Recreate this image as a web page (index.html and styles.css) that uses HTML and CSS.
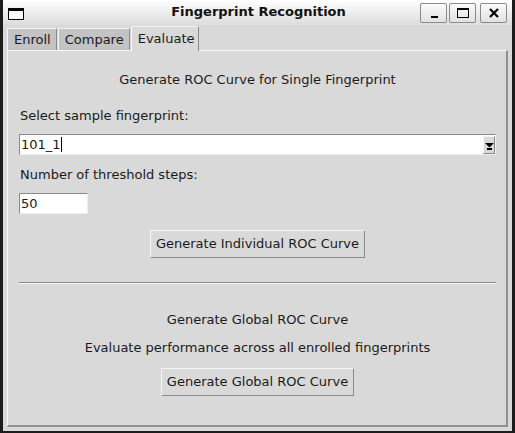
FILE: index.html
```html
<!DOCTYPE html>
<html>
<head>
<meta charset="utf-8">
<title>Fingerprint Recognition</title>
<link rel="stylesheet" href="styles.css">
</head>
<body>
<div class="window">
  <div class="titlebar">
    <svg class="winicon" width="16" height="12" viewBox="0 0 16 12">
      <rect x="0.5" y="0.5" width="15" height="11" fill="#fff" stroke="#000"/>
      <rect x="0" y="0" width="16" height="3" fill="#000"/>
    </svg>
    <div class="title">Fingerprint Recognition</div>
    <div class="wbtns">
      <div class="wbtn"><svg width="12" height="12" viewBox="0 0 12 12"><rect x="3" y="9" width="7" height="2" fill="#000"/></svg></div>
      <div class="wbtn"><svg width="14" height="12" viewBox="0 0 14 12"><rect x="1.5" y="1.5" width="11" height="9" fill="none" stroke="#000"/><rect x="1" y="1" width="12" height="2" fill="#000"/></svg></div>
      <div class="wbtn"><svg width="12" height="12" viewBox="0 0 12 12"><path d="M2 2 L10 10 M10 2 L2 10" stroke="#000" stroke-width="2.2"/></svg></div>
    </div>
  </div>
  <div class="client">
    <div class="tabs">
      <div class="tab">Enroll</div>
      <div class="tab">Compare</div>
      <div class="tab active">Evaluate</div>
    </div>
    <div class="panel">
      <div class="heading h1">Generate ROC Curve for Single Fingerprint</div>
      <div class="label l1">Select sample fingerprint:</div>
      <div class="combo">
        <div class="combo-text">101_1<span class="caret"></span></div>
        <div class="combo-btn"><svg width="9" height="7" viewBox="0 0 9 7"><path d="M0 0 H9 L4.5 4.5 Z" fill="#000"/><rect x="2" y="5" width="5" height="2" fill="#000"/></svg></div>
      </div>
      <div class="label l2">Number of threshold steps:</div>
      <div class="entry">50</div>
      <div class="btnrow b1"><div class="button">Generate Individual ROC Curve</div></div>
      <div class="separator"></div>
      <div class="heading h2">Generate Global ROC Curve</div>
      <div class="heading h3">Evaluate performance across all enrolled fingerprints</div>
      <div class="btnrow b2"><div class="button">Generate Global ROC Curve</div></div>
    </div>
  </div>
</div>
</body>
</html>
```
FILE: styles.css
```css
html, body {
  margin: 0;
  padding: 0;
  background: #1c1c1c;
}
body {
  width: 515px;
  height: 433px;
  overflow: hidden;
  font-family: "DejaVu Sans", sans-serif;
  font-size: 13px;
  color: #1a1a1a;
}
.window {
  width: 515px;
  height: 433px;
  box-sizing: border-box;
  border-left: 3px solid #1c1c1c;
  border-right: 3px solid #1c1c1c;
  border-bottom: 2px solid #1c1c1c;
  display: flex;
  flex-direction: column;
  background: #d9d9d9;
}
.titlebar {
  height: 25px;
  flex: none;
  background: linear-gradient(#ffffff, #dcdcdc);
  display: flex;
  align-items: center;
  position: relative;
}
.winicon {
  margin-left: 5px;
  margin-top: 3px;
}
.title {
  position: absolute;
  left: 0;
  right: 0;
  top: 4px;
  text-align: center;
  font-weight: bold;
  font-size: 13px;
  color: #111;
  padding-left: 2px;
}
.wbtns {
  margin-left: auto;
  margin-right: 5px;
  display: flex;
  gap: 2px;
  position: relative;
}
.wbtn {
  width: 25px;
  height: 18px;
  border: 1px solid #8a8a8a;
  border-radius: 2px;
  background: linear-gradient(#fafafa, #e2e2e2);
  display: flex;
  align-items: center;
  justify-content: center;
}
.wbtn + .wbtn + .wbtn { margin-left: 2px; }
.client {
  flex: 1;
  padding: 1px 4px 4px 4px;
  display: flex;
  flex-direction: column;
}
.tabs {
  display: flex;
  height: 24px;
  flex: none;
  align-items: flex-end;
  position: relative;
  z-index: 1;
}
.tab {
  height: 22px;
  box-sizing: border-box;
  padding: 0 5px 0 6px;
  line-height: 21px;
  background: #c3c3c3;
  border-top: 1px solid #f4f4f4;
  border-left: 1px solid #f4f4f4;
  border-right: 1px solid #8a8a8a;
  border-radius: 2px 2px 0 0;
  margin-right: 1px;
}
.tab.active {
  height: 25px;
  line-height: 23px;
  background: #d9d9d9;
  margin-bottom: -1px;
  padding: 0 4px 0 6px;
}
.panel {
  flex: 1;
  border-top: 1px solid #f6f6f6;
  border-left: 1px solid #f6f6f6;
  border-right: 2px solid #8f8f8f;
  border-bottom: 2px solid #8f8f8f;
  padding: 0 10px 0 11px;
  display: flex;
  flex-direction: column;
}
.heading {
  text-align: center;
  line-height: 17px;
}
.h1 { margin-top: 20px; }
.label { line-height: 17px; margin-left: 1px; }
.l1 { margin-top: 19px; }
.combo {
  margin-top: 10px;
  height: 21px;
  box-sizing: border-box;
  background: #fff;
  border-top: 1px solid #8a8a8a;
  border-left: 1px solid #8a8a8a;
  border-bottom: 1px solid #eeeeee;
  border-right: 1px solid #eeeeee;
  display: flex;
}
.combo-text {
  flex: 1;
  line-height: 19px;
  padding-left: 1px;
  display: flex;
  align-items: center;
}
.caret {
  display: inline-block;
  width: 1px;
  height: 15px;
  background: #000;
  margin-left: 0px;
}
.combo-btn {
  width: 12px;
  margin: 1px 0 0 0;
  height: 18px;
  box-sizing: border-box;
  background: #d9d9d9;
  border-top: 1px solid #f4f4f4;
  border-left: 1px solid #f4f4f4;
  border-right: 1px solid #8a8a8a;
  border-bottom: 1px solid #8a8a8a;
  display: flex;
  align-items: flex-end;
  justify-content: center;
  padding-bottom: 3px;
}
.l2 { margin-top: 11px; }
.entry {
  margin-top: 10px;
  width: 69px;
  height: 21px;
  box-sizing: border-box;
  background: #fff;
  border-top: 1px solid #8a8a8a;
  border-left: 1px solid #8a8a8a;
  border-bottom: 1px solid #eeeeee;
  border-right: 1px solid #eeeeee;
  line-height: 19px;
  padding-left: 1px;
}
.btnrow {
  display: flex;
  justify-content: center;
}
.b1 { margin-top: 16px; }
.button {
  height: 28px;
  box-sizing: border-box;
  padding: 0 5px;
  line-height: 26px;
  background: #d9d9d9;
  border-top: 1px solid #f6f6f6;
  border-left: 1px solid #f6f6f6;
  border-right: 1px solid #8a8a8a;
  border-bottom: 1px solid #8a8a8a;
}
.separator {
  margin-top: 24px;
  height: 1px;
  background: #8a8a8a;
  border-bottom: 1px solid #f6f6f6;
}
.h2 { margin-top: 27px; }
.h3 { margin-top: 11px; }
.b2 { margin-top: 12px; }
```
